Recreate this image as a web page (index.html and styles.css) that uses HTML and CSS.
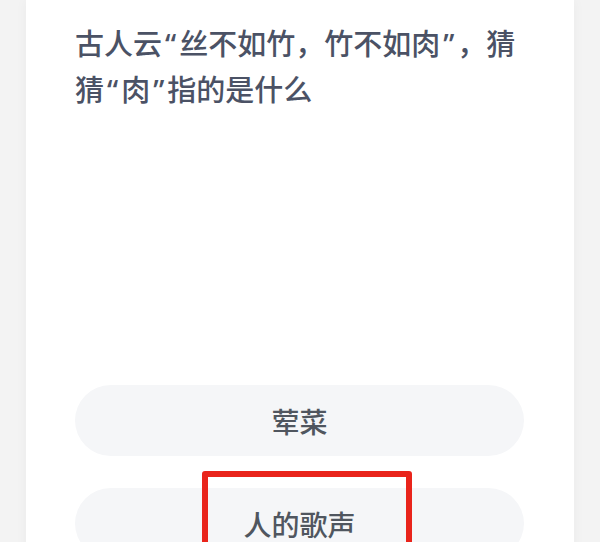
FILE: index.html
```html
<!DOCTYPE html>
<html lang="zh-CN">
<head>
  <meta charset="UTF-8" />
  <meta name="viewport" content="width=device-width, initial-scale=1.0"/>
  <title>答题</title>
  <link rel="stylesheet" href="styles.css">
</head>
<body>
  <main class="card">
    <!-- 题目 -->
    <p class="question">古人云<span class="q">“</span>丝不如竹，竹不如肉<span class="q">”</span>，猜猜<span class="q">“</span>肉<span class="q">”</span>指的是什么</p>

    <!-- 选项 -->
    <div class="options">
      <button class="option">荤菜</button>
      <button class="option picked">人的歌声</button>
    </div>
  </main>
</body>
</html>
```

FILE: styles.css
```css
body {
  margin: 0;
  padding: 0;
  background: #f3f3f3;
  font-family: "Noto Sans CJK SC", "Noto Sans", sans-serif;
  overflow: hidden;
}

.card {
  margin: 0 26px;
  min-height: 600px;
  padding: 21px 50px 0 49px;
  background: #fff;
  box-shadow: 0 0 12px rgba(0, 0, 0, 0.04);
}

/* Noto Sans first so the curly quotes stay narrow, CJK falls through */
.question {
  margin: 0;
  height: 364px;
  font-family: "Noto Sans", "Noto Sans CJK SC", sans-serif;
  font-size: 29px;
  font-weight: 500;
  line-height: 46px;
  color: #4b5265;
}

.q {
  margin: 0 3px;
}

.options {
  display: flex;
  flex-direction: column;
  gap: 32px;
}

.option {
  position: relative;
  height: 71px;
  border: none;
  border-radius: 36px;
  background: #f5f6f8;
  color: #50565f;
  font-family: inherit;
  font-size: 28px;
  font-weight: 500;
}

.picked::after {
  content: "";
  position: absolute;
  left: 127px;
  top: -17px;
  width: 198px;
  height: 100px;
  border: 6px solid #e9241b;
  border-radius: 3px;
}
```
